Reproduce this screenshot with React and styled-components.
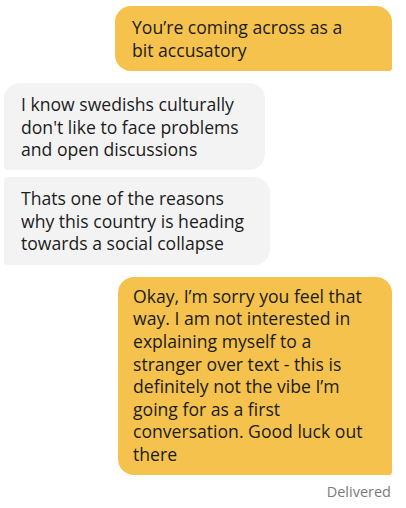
import React from "react";
import styled, { createGlobalStyle } from "styled-components";

const Global = createGlobalStyle`
  html, body { margin: 0; padding: 0; background: #ffffff; }
  body { font-family: "Open Sans", "Liberation Sans", sans-serif; }
`;

const Thread = styled.div`
  display: flex;
  flex-direction: column;
  padding: 6px 14px 0 4px;
  width: 406px;
  box-sizing: border-box;
`;

const Bubble = styled.div`
  align-self: ${(p) => (p.$mine ? "flex-end" : "flex-start")};
  width: ${(p) => p.$w}px;
  box-sizing: border-box;
  background: ${(p) => (p.$mine ? "#F4C24D" : "#F3F3F3")};
  color: #1c1c1c;
  font-size: 17.6px;
  line-height: 22.6px;
  padding: ${(p) => p.$pad || "10px 16px"};
  margin-top: ${(p) => p.$mt || 0}px;
  border-radius: ${(p) => p.$radius};
  white-space: nowrap;
`;

const Line = styled.div``;

const Status = styled.div`
  align-self: flex-end;
  font-size: 14.5px;
  color: #7a7a7a;
  margin-top: 7px;
  margin-right: 1px;
`;

const lines = (arr) => arr.map((t, i) => <Line key={i}>{t}</Line>);

export default function App() {
  return (
    <>
      <Global />
      <Thread>
        <Bubble $mine $w={277} $radius="16px 16px 3px 16px" $pad="10px 17px">
          {lines(["You’re coming across as a", "bit accusatory"])}
        </Bubble>
        <Bubble $w={261} $mt={12} $radius="16px 16px 16px 3px" $pad="10px 17px 9px">
          {lines(["I know swedishs culturally", "don't like to face problems", "and open discussions"])}
        </Bubble>
        <Bubble $w={266} $mt={7} $radius="3px 16px 16px 3px" $pad="10px 17px 10px">
          {lines(["Thats one of the reasons", "why this country is heading", "towards a social collapse"])}
        </Bubble>
        <Bubble $mine $w={274} $mt={12} $radius="16px 16px 3px 16px" $pad="8px 17px 9px 15px">
          {lines([
            "Okay, I’m sorry you feel that",
            "way. I am not interested in",
            "explaining myself to a",
            "stranger over text - this is",
            "definitely not the vibe I’m",
            "going for as a first",
            "conversation. Good luck out",
            "there",
          ])}
        </Bubble>
        <Status>Delivered</Status>
      </Thread>
    </>
  );
}
